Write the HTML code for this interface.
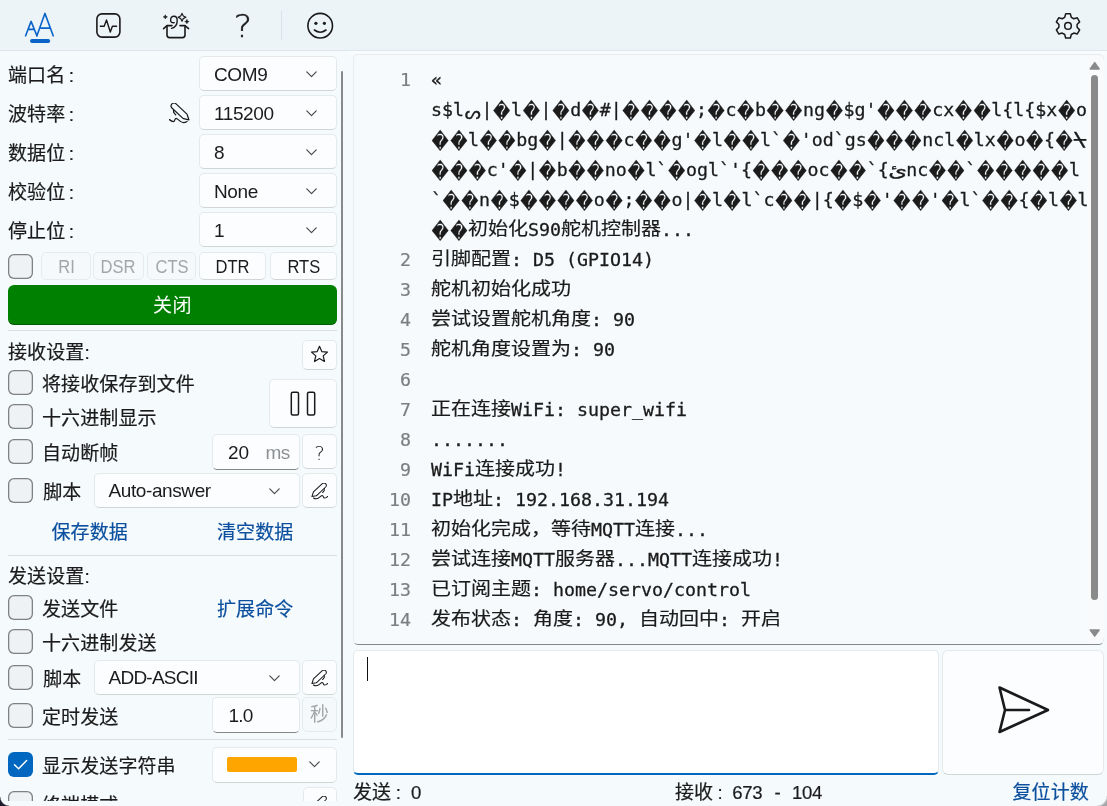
<!DOCTYPE html>
<html lang="zh-CN">
<head>
<meta charset="utf-8">
<title>Serial</title>
<style>
*{box-sizing:border-box;margin:0;padding:0}
html,body{width:1107px;height:806px;overflow:hidden}
body{position:relative;background:#f5fafc;font-family:"Liberation Sans","Noto Sans CJK SC",sans-serif;font-size:19px;color:#1b1b1b}
.abs{position:absolute}
#top{position:absolute;left:0;top:0;width:1107px;height:51px;background:#edf4f8;border-bottom:1px solid #dfe7ec}
.lbl{position:absolute;left:8px;height:30px;line-height:30px;white-space:nowrap;font-size:19px;letter-spacing:0.1px;word-spacing:-2px;-webkit-text-stroke:0.2px}
.cb{position:absolute;left:8px;width:25px;height:25px;border:0;box-shadow:inset 0 0 0 1.3px #7f8183;border-radius:6px;background:#eef2f5}
.cb.on{background:#0067c0;box-shadow:none}
.btn{position:absolute;background:#fbfdfe;border:1px solid #e4e9ec;border-bottom-color:#d0d5d8;border-radius:5px;text-align:center;white-space:nowrap}
.btn.dis{background:#f5f9fb;border-color:#e6ebee;color:#a3a6a8}
.combo{position:absolute;background:#fbfdfe;border:1px solid #e4e9ec;border-bottom-color:#d0d5d8;border-radius:5px;white-space:nowrap}
.combo span{position:absolute;left:14px;top:1.5px;line-height:32.5px;letter-spacing:-0.4px}
.combo svg{position:absolute;right:19px;top:13.5px}
.tb{position:absolute;background:#fbfdfe;border:1px solid #e4e9ec;border-bottom:1.3px solid #868686;border-radius:5px;white-space:nowrap}
.sep{position:absolute;left:8px;width:329px;height:1px;background:#d9dfe3}
.link{position:absolute;color:#0b4f9e;-webkit-text-stroke:0.2px;letter-spacing:0.1px;white-space:nowrap;height:30px;line-height:30px}

#con{position:absolute;left:353px;top:54px;width:751px;height:590.7px;background:#f6fafc;border:1px solid #e6ecef;border-bottom:1.4px solid #868686;border-radius:5px}
.num{position:absolute;left:360px;width:51px;text-align:right;height:30px;line-height:30px;font-family:"DejaVu Sans Mono","Liberation Mono",monospace;font-size:18.27px;color:#7c7e80;-webkit-text-stroke:0.2px #7c7e80}
.ln{position:absolute;left:431px;height:30px;line-height:30px;white-space:pre;font-family:"DejaVu Sans Mono","Liberation Mono","Noto Sans CJK SC",monospace;font-size:18.27px;color:#1b1b1b;-webkit-text-stroke:0.3px #1b1b1b}
.ln i{display:inline-block;font-style:normal;font-family:"Noto Sans CJK SC",sans-serif;font-size:20px;line-height:1;transform:translateY(-0.5px) scaleY(0.915);transform-origin:50% 50%;-webkit-text-stroke:0.2px #1b1b1b}
.ln b{display:inline-block;line-height:1;font-weight:normal;font-family:"DejaVu Sans",sans-serif;font-size:16.4px;letter-spacing:1.74px;margin:0 -0.85px 0 0.85px;transform:translateY(1.9px) scaleY(1.28);transform-origin:50% 55%}
.ln s{text-decoration:none;display:inline-block;line-height:1;width:14px;text-align:center;transform:scale(1.3,1.05)}
.ln u{text-decoration:none;font-family:"DejaVu Sans",sans-serif;font-size:18px;display:inline-block;text-align:center;line-height:1}
#left,#right,#top{will-change:transform}
.nx{display:inline-block;transform:scaleX(0.87)}
.st span{position:absolute;top:0;font-size:18.6px;letter-spacing:-0.3px}
</style>
</head>
<body>
<div id="top">
<svg class="abs" style="left:0;top:0" width="1107" height="50" viewBox="0 0 1107 50">
<defs><symbol id="pen" viewBox="0 0 21 21"><g fill="none" stroke="#1a1a1a" stroke-width="1.25" stroke-linecap="round" stroke-linejoin="round"><path d="M7.05 0.85 L18 11.1 L19.9 16.8 L14.6 15.7 Q13.9 15.4 13.4 14.9 L2.95 4.95 A2.9 2.9 0 0 1 7.05 0.85 Z"/><path d="M4.5 6.8 L4.7 9.4 L6.7 11.8"/><path d="M0.3 16.6 C1.7 17.4 3 18.8 4.4 18.6 C6 18.3 5.5 15.4 7.2 15.3 C8.8 15.3 11 19.6 14.5 19.6 C16 19.6 17.2 19 18 18.5"/></g></symbol></defs>
<g fill="none" stroke="#0a63c9" stroke-width="1.6" stroke-linecap="round" stroke-linejoin="round">
<path d="M25.6 35.8 L31.1 21.4 L36.9 35.8 M28 29.4 L34.4 29.4"/>
<path d="M36.9 35.8 L44.9 13.4 L53.2 35.8 M40.9 28.1 L49.6 28.1"/>
</g>
<rect x="30" y="39" width="20.2" height="3.9" rx="1.95" fill="#0a63c9"/>
<g fill="none" stroke="#1a1a1a" stroke-width="1.6" stroke-linecap="round" stroke-linejoin="round">
<rect x="96.9" y="13.9" width="23" height="23.2" rx="5"/>
<path d="M100.3 26.3 L104.2 26.3 L106.5 20 L110.3 32 L112.4 26.3 L116.6 26.3" stroke-width="1.4"/>
<!-- box with sparkles -->
<path d="M167 26 L167 35 Q167 37.6 169.6 37.6 L182.4 37.6 Q185 37.6 185 35 L185 26" />
<path d="M163.6 28.6 L167 25.6 L172 25.6 M180 25.6 L185 25.6 L188.6 28.6"/>
<path d="M170.6 20.2 C170.6 17.6 172.2 16.2 174 16.2 C176.2 16.2 177.2 18 177.2 20.6 C177.2 24.6 175 27.6 171.6 28.4 M174.2 22.6 C172.6 23.2 170.6 22.4 170.6 20.2" stroke-width="1.4"/>
<path d="M182 13.4 L183.3 16 L185.9 17.3 L183.3 18.6 L182 21.2 L180.7 18.6 L178.1 17.3 L180.7 16 Z" stroke-width="1.2"/>
</g>
<path d="M165.3 14.8 L165.9 16.3 L167.4 16.9 L165.9 17.5 L165.3 19 L164.7 17.5 L163.2 16.9 L164.7 16.3 Z" fill="#1a1a1a" stroke="#1a1a1a" stroke-width="0.6" stroke-linejoin="round"/>
<path d="M186.9 19.4 L187.5 21 L189.1 21.6 L187.5 22.2 L186.9 23.8 L186.3 22.2 L184.7 21.6 L186.3 21 Z" fill="#1a1a1a" stroke="#1a1a1a" stroke-width="0.6" stroke-linejoin="round"/>
<rect x="281" y="10.5" width="1" height="29" fill="#dbe3e8"/>
<g fill="none" stroke="#1a1a1a" stroke-width="1.6" stroke-linecap="round" stroke-linejoin="round">
<circle cx="320.2" cy="25.7" r="12.3"/>
<path d="M314.4 30 Q320.2 34.6 326 30" />
<path d="M1071.30 17.31 L1070.35 13.83 L1065.65 13.83 L1064.70 17.31 L1062.21 18.75 L1058.72 17.83 L1056.37 21.90 L1058.91 24.46 L1058.91 27.34 L1056.37 29.90 L1058.72 33.97 L1062.21 33.05 L1064.70 34.49 L1065.65 37.97 L1070.35 37.97 L1071.30 34.49 L1073.79 33.05 L1077.28 33.97 L1079.63 29.90 L1077.09 27.34 L1077.09 24.46 L1079.63 21.90 L1077.28 17.83 L1073.79 18.75 Z" stroke-width="1.5"/>
<circle cx="1068" cy="25.9" r="3.3" stroke-width="1.5"/>
</g>
<circle cx="315.9" cy="23.3" r="1.6" fill="#1a1a1a"/><circle cx="324.4" cy="23.3" r="1.6" fill="#1a1a1a"/>
</svg>
<div class="abs" id="qm" style="left:230px;top:6px;width:26px;height:40px;line-height:40px;text-align:center;font-family:'DejaVu Sans','Liberation Sans',sans-serif;font-weight:200;font-size:31.5px;transform:scaleX(1.12);color:#1a1a1a;-webkit-text-stroke:0.35px #1a1a1a">?</div>
</div>
<div id="left">
<div class="lbl" style="top:60.5px">端口名 :</div>
<div class="combo" style="left:199px;top:56px;width:137.5px;height:34.5px"><span>COM9</span><svg width="11" height="7" viewBox="0 0 11 7"><path d="M0.8 0.9 L5.5 5.6 L10.2 0.9" fill="none" stroke="#4a4a4a" stroke-width="1.2" stroke-linecap="round" stroke-linejoin="round"/></svg></div>
<div class="lbl" style="top:99.5px">波特率 :</div>
<div class="combo" style="left:199px;top:95px;width:137.5px;height:34.5px"><span>115200</span><svg width="11" height="7" viewBox="0 0 11 7"><path d="M0.8 0.9 L5.5 5.6 L10.2 0.9" fill="none" stroke="#4a4a4a" stroke-width="1.2" stroke-linecap="round" stroke-linejoin="round"/></svg></div>
<div class="lbl" style="top:138.5px">数据位 :</div>
<div class="combo" style="left:199px;top:134px;width:137.5px;height:34.5px"><span>8</span><svg width="11" height="7" viewBox="0 0 11 7"><path d="M0.8 0.9 L5.5 5.6 L10.2 0.9" fill="none" stroke="#4a4a4a" stroke-width="1.2" stroke-linecap="round" stroke-linejoin="round"/></svg></div>
<div class="lbl" style="top:177.5px">校验位 :</div>
<div class="combo" style="left:199px;top:173px;width:137.5px;height:34.5px"><span>None</span><svg width="11" height="7" viewBox="0 0 11 7"><path d="M0.8 0.9 L5.5 5.6 L10.2 0.9" fill="none" stroke="#4a4a4a" stroke-width="1.2" stroke-linecap="round" stroke-linejoin="round"/></svg></div>
<div class="lbl" style="top:216.5px">停止位 :</div>
<div class="combo" style="left:199px;top:212px;width:137.5px;height:34.5px"><span>1</span><svg width="11" height="7" viewBox="0 0 11 7"><path d="M0.8 0.9 L5.5 5.6 L10.2 0.9" fill="none" stroke="#4a4a4a" stroke-width="1.2" stroke-linecap="round" stroke-linejoin="round"/></svg></div>
<div class="cb" style="top:254px"></div>
<div class="btn dis" style="left:41px;top:252px;width:50px;height:28px;line-height:27.5px"><span class="nx">RI</span></div>
<div class="btn dis" style="left:93px;top:252px;width:51px;height:28px;line-height:27.5px"><span class="nx">DSR</span></div>
<div class="btn dis" style="left:147px;top:252px;width:49px;height:28px;line-height:27.5px"><span class="nx">CTS</span></div>
<div class="btn" style="left:199px;top:252px;width:67px;height:28px;line-height:27.5px"><span class="nx">DTR</span></div>
<div class="btn" style="left:270px;top:252px;width:67px;height:28px;line-height:27.5px"><span class="nx">RTS</span></div>
<div class="abs" style="left:8px;top:285px;width:329px;height:40px;background:#008000;border-bottom:1.2px solid #005a00;border-radius:6px;color:#fff;text-align:center;line-height:41.5px;letter-spacing:0.6px">关闭</div>
<div class="sep" style="top:330px"></div>
<div class="lbl" style="top:338px">接收设置:</div>
<div class="btn" id="star" style="left:302px;top:340px;width:35px;height:30px"><svg class="abs" style="left:6.5px;top:4.2px" width="19" height="19" viewBox="-9.5 -9.5 19 19"><path d="M0 -8.2 L2.3 -2.9 L8 -2.4 L3.7 1.4 L5 7 L0 4 L-5 7 L-3.7 1.4 L-8 -2.4 L-2.3 -2.9 Z" fill="none" stroke="#1a1a1a" stroke-width="1.2" stroke-linejoin="round"/></svg></div>
<div class="cb" style="top:369.5px"></div>
<div class="lbl" style="left:42px;top:370px">将接收保存到文件</div>
<div class="cb" style="top:403.5px"></div>
<div class="lbl" style="left:42px;top:404px">十六进制显示</div>
<div class="cb" style="top:438.5px"></div>
<div class="lbl" style="left:42px;top:439px">自动断帧</div>
<div class="cb" style="top:478px"></div>
<div class="lbl" style="left:43.2px;top:478px">脚本</div>
<div class="btn" id="pause" style="left:269px;top:379px;width:67.5px;height:48.5px"><svg class="abs" style="left:0;top:0" width="67" height="48"><g fill="none" stroke="#1a1a1a" stroke-width="1.5"><rect x="21.3" y="12.2" width="7.2" height="22.8" rx="1.5"/><rect x="37.5" y="12.2" width="7.2" height="22.8" rx="1.5"/></g></svg></div>
<div class="tb" style="left:212px;top:434px;width:88px;height:36px"><span class="abs" style="left:15px;top:0;line-height:36px">20</span><span class="abs" style="left:52.5px;top:0;line-height:36px;color:#8d9093;letter-spacing:-0.5px">ms</span></div>
<div class="btn" id="q2" style="left:302px;top:434px;width:35px;height:35px;line-height:36.5px;font-family:'DejaVu Sans','Liberation Sans',sans-serif;font-weight:200;font-size:20px">?</div>
<div class="combo" style="left:94px;top:473px;width:205.5px;height:34.5px"><span style="left:13.5px;top:0.8px">Auto-answer</span><svg style="right:19px" width="11" height="7" viewBox="0 0 11 7"><path d="M0.8 0.9 L5.5 5.6 L10.2 0.9" fill="none" stroke="#4a4a4a" stroke-width="1.2" stroke-linecap="round" stroke-linejoin="round"/></svg></div>
<div class="btn" id="pen1" style="left:302px;top:473px;width:35px;height:34.5px"><svg class="abs" style="left:7.5px;top:8.5px;transform:scaleX(-1)" width="17" height="17"><use href="#pen"/></svg></div>
<div class="link" style="left:51.5px;top:518px">保存数据</div>
<div class="link" style="left:217px;top:518px">清空数据</div>
<div class="sep" style="top:555px"></div>
<div class="lbl" style="top:562px">发送设置:</div>
<div class="cb" style="top:594.5px"></div>
<div class="lbl" style="left:42px;top:595px">发送文件</div>
<div class="cb" style="top:628.5px"></div>
<div class="lbl" style="left:42px;top:629px">十六进制发送</div>
<div class="cb" style="top:665px"></div>
<div class="lbl" style="left:43.2px;top:664.8px">脚本</div>
<div class="cb" style="top:702.5px"></div>
<div class="lbl" style="left:42px;top:703px">定时发送</div>
<div class="link" style="left:217px;top:595px">扩展命令</div>
<div class="combo" style="left:94px;top:660px;width:205.5px;height:34.5px"><span style="left:13.5px;top:0.5px;letter-spacing:-0.75px">ADD-ASCII</span><svg style="right:19px" width="11" height="7" viewBox="0 0 11 7"><path d="M0.8 0.9 L5.5 5.6 L10.2 0.9" fill="none" stroke="#4a4a4a" stroke-width="1.2" stroke-linecap="round" stroke-linejoin="round"/></svg></div>
<div class="btn" id="pen2" style="left:302px;top:660px;width:35px;height:34.5px"><svg class="abs" style="left:7.5px;top:8.5px;transform:scaleX(-1)" width="17" height="17"><use href="#pen"/></svg></div>
<div class="tb" style="left:212px;top:697px;width:88px;height:36px"><span class="abs" style="left:15.5px;top:0;line-height:36px;letter-spacing:-0.8px">1.0</span></div>
<div class="btn dis" style="left:302px;top:697px;width:35px;height:35px;line-height:34px">秒</div>
<div class="sep" style="top:739px"></div>
<div class="cb on" style="top:751.5px"><svg width="25" height="25" viewBox="0 0 25 25" style="position:absolute;left:0;top:0"><path d="M6.5 12.8 L10.6 16.8 L18.6 8.6" fill="none" stroke="#fff" stroke-width="1.5" stroke-linecap="round" stroke-linejoin="round"/></svg></div>
<div class="lbl" style="left:42px;top:752px">显示发送字符串</div>
<div class="combo" style="left:212px;top:747px;width:124.5px;height:36px"><div class="abs" style="left:13.5px;top:9.3px;width:70px;height:14.7px;background:#ffa500;border-radius:2px"></div><svg style="right:15.5px;top:13.3px" width="11" height="7" viewBox="0 0 11 7"><path d="M0.8 0.9 L5.5 5.6 L10.2 0.9" fill="none" stroke="#4a4a4a" stroke-width="1.2" stroke-linecap="round" stroke-linejoin="round"/></svg></div>
<div class="cb" style="top:791px"></div>
<div class="lbl" style="left:42px;top:791px">终端模式</div>
<div class="btn" id="pen3" style="left:302.5px;top:786.5px;width:34px;height:34px"><svg class="abs" style="left:7.5px;top:8.5px;transform:scaleX(-1)" width="17" height="17"><use href="#pen"/></svg></div>
<svg class="abs" style="left:169px;top:103px" width="21" height="21"><use href="#pen"/></svg>
<div class="abs" style="left:341.3px;top:70.8px;width:2.2px;height:667.2px;background:#87898b;border-radius:1.3px"></div>
<div class="abs" style="left:0;top:800.5px;width:348px;height:6px;background:#f5fafc"></div>
</div>
<div id="right">
<div class="abs" style="left:346px;top:51px;width:761px;height:3px;background:#f9fcfd"></div>
<div id="con"></div>
<div class="num" style="top:65px">1</div>
<div class="ln" style="top:65px">«</div>
<div class="ln" style="top:95px">s$l<u style="width:17.5px;transform:translateY(2.5px)">ᔕ</u>|<b>�</b>l<b>�</b>|<b>�</b>d<b>�</b>#|<b>����</b>;<b>�</b>c<b>�</b>b<b>��</b>ng<b>�</b>$g'<b>���</b>cx<b>��</b>l{l{$x<b>�</b>o</div>
<div class="ln" style="top:125px"><b>��</b>l<b>��</b>bg<b>�</b>|<b>���</b>c<b>��</b>g'<b>�</b>l<b>��</b>l`<b>�</b>'od`gs<b>���</b>ncl<b>�</b>lx<b>�</b>o<b>�</b>{<b>�</b><s>⍀</s></div>
<div class="ln" style="top:155px"><b>���</b>c'<b>�</b>|<b>�</b>b<b>��</b>no<b>�</b>l`<b>�</b>ogl`'{<b>���</b>oc<b>��</b>`{<u style="width:17.6px;transform:scaleX(1.35)">ئ</u>nc<b>��</b>`<b>�����</b>l</div>
<div class="ln" style="top:185px">`<b>��</b>n<b>�</b>$<b>����</b>o<b>�</b>;<b>��</b>o|<b>�</b>l<b>�</b>l`c<b>��</b>|{<b>�</b>$<b>�</b>'<b>��</b>'<b>�</b>l`<b>��</b>{<b>�</b>l<b>�</b>l</div>
<div class="ln" style="top:215px"><b>��</b><i>初始化</i>S90<i>舵机控制器</i>...</div>
<div class="num" style="top:245px">2</div>
<div class="ln" style="top:245px"><i>引脚配置</i>: D5 (GPIO14)</div>
<div class="num" style="top:275px">3</div>
<div class="ln" style="top:275px"><i>舵机初始化成功</i></div>
<div class="num" style="top:305px">4</div>
<div class="ln" style="top:305px"><i>尝试设置舵机角度</i>: 90</div>
<div class="num" style="top:335px">5</div>
<div class="ln" style="top:335px"><i>舵机角度设置为</i>: 90</div>
<div class="num" style="top:365px">6</div>
<div class="num" style="top:395px">7</div>
<div class="ln" style="top:395px"><i>正在连接</i>WiFi: super_wifi</div>
<div class="num" style="top:425px">8</div>
<div class="ln" style="top:425px">.......</div>
<div class="num" style="top:455px">9</div>
<div class="ln" style="top:455px">WiFi<i>连接成功</i>!</div>
<div class="num" style="top:485px">10</div>
<div class="ln" style="top:485px">IP<i>地址</i>: 192.168.31.194</div>
<div class="num" style="top:515px">11</div>
<div class="ln" style="top:515px"><i>初始化完成，等待</i>MQTT<i>连接</i>...</div>
<div class="num" style="top:545px">12</div>
<div class="ln" style="top:545px"><i>尝试连接</i>MQTT<i>服务器</i>...MQTT<i>连接成功</i>!</div>
<div class="num" style="top:575px">13</div>
<div class="ln" style="top:575px"><i>已订阅主题</i>: home/servo/control</div>
<div class="num" style="top:605px">14</div>
<div class="ln" style="top:605px"><i>发布状态</i>: <i>角度</i>: 90, <i>自动回中</i>: <i>开启</i></div>
<div class="abs" style="left:1087px;top:56px;width:16.5px;height:586px;background:#f8fafb;border-radius:0 5px 5px 0"></div>
<svg class="abs" style="left:1087px;top:58px" width="17" height="14" viewBox="0 0 17 14"><path d="M3.2 11 L7.7 4.6 L12.2 11 Z" fill="#8a8a8a" stroke="#8a8a8a" stroke-width="1.4" stroke-linejoin="round"/></svg>
<div class="abs" style="left:1091px;top:74.5px;width:7.3px;height:525.5px;background:#8a8a8a;border-radius:3.7px"></div>
<svg class="abs" style="left:1087px;top:626px" width="17" height="14" viewBox="0 0 17 14"><path d="M3.2 4 L7.7 10.2 L12.2 4 Z" fill="#8a8a8a" stroke="#8a8a8a" stroke-width="1.4" stroke-linejoin="round"/></svg>
<div class="abs" style="left:353px;top:650px;width:585.5px;height:125px;background:#fff;border:1px solid #e3e9ec;border-bottom:2.4px solid #0067c0;border-radius:5px"></div>
<div class="abs" style="left:367px;top:657px;width:1.3px;height:24px;background:#111"></div>
<div class="btn" id="send" style="left:942px;top:650px;width:162px;height:124.5px;border-radius:6px"><svg class="abs" style="left:50px;top:30px" width="64" height="60" viewBox="0 0 64 60"><path d="M6.5 6.5 L55 29 L6.5 51 L12 29 Z M12 29 L36 29" fill="none" stroke="#1a1a1a" stroke-width="2.6" stroke-linejoin="round" stroke-linecap="round"/></svg></div>
<div class="lbl st" style="left:353px;top:778px">发送<span style="left:42.7px">:</span><span style="left:58px">0</span></div>
<div class="lbl st" style="left:675px;top:778px">接收<span style="left:42.4px">:</span><span style="left:57.2px">673</span><span style="left:99.6px">-</span><span style="left:117px">104</span></div>
<div class="link" style="left:1012.5px;top:778px">复位计数</div>
</div>
<div class="abs" style="left:0;top:797px;width:9px;height:9px;background:radial-gradient(circle at 100% 0,rgba(0,0,0,0) 8px,#1c1c2c 9.3px)"></div>
<div class="abs" style="left:1097px;top:796px;width:10px;height:10px;background:radial-gradient(circle at 0 0,rgba(0,0,0,0) 9px,#a4a6a8 11px)"></div>
</body>
</html>
